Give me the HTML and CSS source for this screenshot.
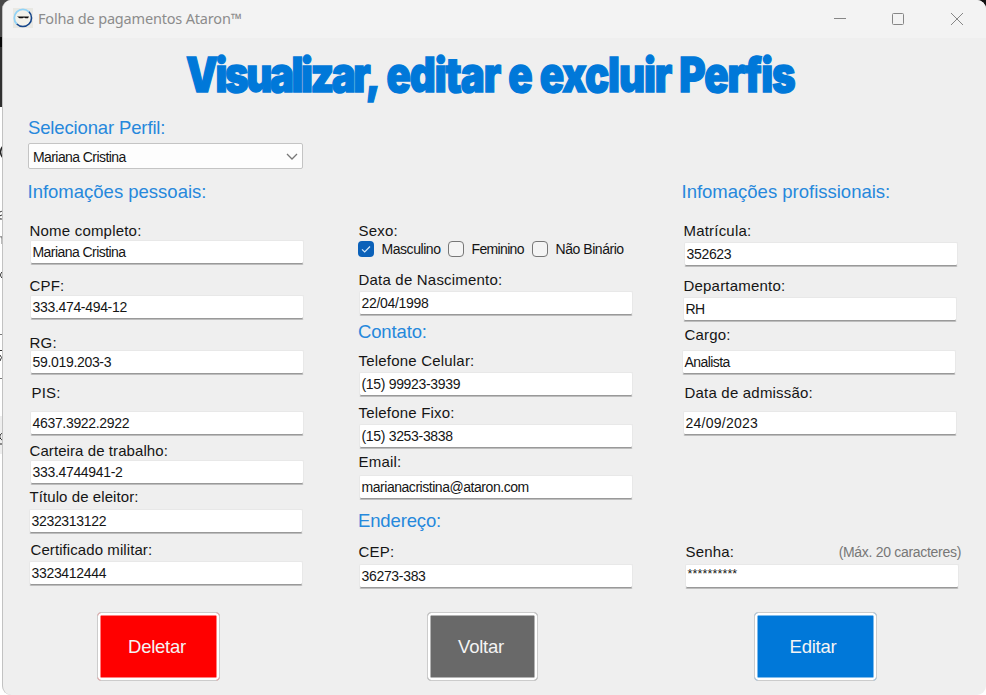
FILE: index.html
```html
<!DOCTYPE html>
<html lang="pt-BR">
<head>
<meta charset="utf-8">
<title>Folha de pagamentos Ataron™</title>
<link rel="stylesheet" href="styles.css">
</head>
<body>
<div class="desktop">
<svg class="behind" width="12" height="695" viewBox="0 0 12 695" fill="none">
  <rect width="12" height="37" fill="#484848"/><rect y="37" width="12" height="10" fill="#080808"/><rect y="47" width="12" height="60" fill="#303030"/><rect y="107" width="12" height="588" fill="#fff"/>
  <path d="M3 146Q-2 152 3 158" stroke="#222" stroke-width="1.5"/>
  <path d="M0 212Q3 210 3 214V219M3 215Q-2 215 0 219H3M3 271Q-2 275 3 279" stroke="#333"/>
  <path d="M0 237Q2 235 2 239V244" stroke="#777"/>
  <path d="M0 334.5H3M0 378.500H3" stroke="#777"/>
  <path d="M0 350.500H3M0 355Q3 357 0 361" stroke="#333"/>
  <rect y="416" width="3" height="38" fill="#eee"/><path d="M3 433Q-1 434 0 438Q2 441 3 439M0 444H3" stroke="#222"/>
</svg>
<main class="window">
  <header class="titlebar">
    <svg class="logo" width="20" height="20" viewBox="0 0 20 20" fill="none">
      <rect width="20" height="20" fill="#e8e8e3"/>
      <circle cx="10" cy="9.800" r="7.800" fill="#f3f2eb"/>
      <path d="M3.800 16A8.400 8.400 0 0 1 16 3.800" stroke="#91d3f7" stroke-width="1.800"/>
      <path d="M16 3.800A8.400 8.400 0 0 1 3.800 16" stroke="#16468b" stroke-width="1.600"/>
      <path d="M4 8.500H16L15 10.200H12.500L11 9.500L9.500 10.200H6.500Z" fill="#111"/>
    </svg>
    <span class="caption">Folha de pagamentos Ataron™</span>
    <svg class="controls" width="132" height="14" viewBox="0 0 132 14" fill="none" stroke="#868686">
      <path d="M0 6.500H12"/><rect x="58.500" y="1.500" width="11" height="11" rx="1"/><path d="M117 1L129 13M129 1L117 13"/>
    </svg>
  </header>
  <h1><span><b>Visualizar,</b> editar e excluir Perfis</span></h1>
  <div class="form">
    <section class="left">
      <h2>Selecionar Perfil:</h2>
      <div class="select g5"><span>Mariana Cristina</span><svg width="12" height="8" viewBox="0 0 12 8" fill="none" stroke="#777" stroke-width="1.300"><path d="M1 1L6 6L11 1"/></svg></div>
      <h2 class="g13 wide">Infomações pessoais:</h2>
      <label class="g22 in1">Nome completo:</label><div class="field g2 in2 words">Mariana Cristina</div>
      <label class="g14 in1">CPF:</label><div class="field g2 in2 nums">333.474-494-12</div>
      <label class="g16 in1">RG:</label><div class="field in2 nums">59.019.203-3</div>
      <label class="g11 in3">PIS:</label><div class="field g11 in2 nums">4637.3922.2922</div>
      <label class="g8 in1 tight">Carteira de trabalho:</label><div class="field g2 in2 nums">333.4744941-2</div>
      <label class="g5 in1 tight">Título de eleitor:</label><div class="field g5 in1 nums">3232313122</div>
      <label class="g9 in2 tight">Certificado militar:</label><div class="field g4 in1 nums">3323412444</div>
    </section>
    <section class="middle">
      <label>Sexo:</label>
      <div class="checks g3">
        <div class="check masc"><i class="box on"><svg width="16" height="16" viewBox="0 0 16 16" fill="none" stroke="#d5e9fb" stroke-width="1.200"><path d="M4 8.300L6.700 11L12 5.500"/></svg></i><span>Masculino</span></div>
        <div class="check fem"><i class="box"></i><span>Feminino</span></div>
        <div class="check"><i class="box"></i><span>Não Binário</span></div>
      </div>
      <label class="g16">Data de Nascimento:</label><div class="field g4 in1 nums">22/04/1998</div>
      <h2 class="g6">Contato:</h2>
      <label class="g12">Telefone Celular:</label><div class="field g4 in1 nums">(15) 99923-3939</div>
      <label class="g9">Telefone Fixo:</label><div class="field g4 in1 nums">(15) 3253-3838</div>
      <label class="g6">Email:</label><div class="field g6 in1 mail">marianacristina@ataron.com</div>
      <h2 class="g11">Endereço:</h2>
      <label class="g14">CEP:</label><div class="field g5 in1 nums">36273-383</div>
    </section>
    <section class="right">
      <h2 class="wide">Infomações profissionais:</h2>
      <label class="g22 in1">Matrícula:</label><div class="field g4 in2 nums">352623</div>
      <label class="g12 in1">Departamento:</label><div class="field g4 in1 words">RH</div>
      <label class="g6 in2">Cargo:</label><div class="field g8 words">Analista</div>
      <label class="g11 in2">Data de admissão:</label><div class="field g11 in1 date">24/09/2023</div>
      <div class="password g109"><label>Senha:</label><span>(Máx. 20 caracteres)</span></div><div class="field g5 in3 stars">**********</div>
    </section>
  </div>
  <footer><button class="delete">Deletar</button><button class="return">Voltar</button><button class="edit">Editar</button></footer>
</main>
</div>
</body>
</html>
```
FILE: styles.css
```css
* { box-sizing: border-box; }
body { margin: 0; width: 986px; height: 695px; overflow: hidden; font-family: "Liberation Sans", Arial, sans-serif; color: #151515; }
.desktop { position: relative; height: 695px; padding-left: 2px; background: linear-gradient(#111 0 50px, #fff 50px); }
.behind { position: absolute; left: 0; top: 0; }
.window { position: relative; width: 984px; height: 695px; border-left: 1px solid #c2c2c2; border-radius: 9px; background: #efefef; overflow: hidden; }
.titlebar { height: 38px; display: flex; align-items: center; padding: 0 20px 0 10px; background: #f3f3f3; }
.logo { margin-right: 5px; margin-top: -2px; }
.caption { font: 14.5px/20px "Noto Sans", sans-serif; color: #8c8c8c; flex: 1; white-space: nowrap; margin-top: -2px; letter-spacing: -.18px; }
.controls { margin-top: -1px; }
h1 { margin: 0; height: 80px; padding: 7px 0 0 183px; color: #0078d9; white-space: nowrap; font: 900 48px/60px Inter, sans-serif; }
h1 span { display: inline-block; letter-spacing: -1.3px; word-spacing: 1.5px; -webkit-text-stroke: 1.4px #0078d9; transform: scaleX(.838); transform-origin: left; }
h1 b { font-weight: 900; letter-spacing: -2.9px; }
.form { display: grid; grid-template-columns: 330px 324px 1fr; padding-left: 25px; height: 494px; align-items: start; }
.form section { display: flex; flex-direction: column; align-items: flex-start; min-width: 0; }
.middle { padding-top: 106px; }
.right { padding-top: 64px; }
h2 { margin: 0; font-size: 18.5px; line-height: 20px; height: 20px; font-weight: 400; color: #2688dc; white-space: nowrap; letter-spacing: -.14px; }
h2.wide { margin-left: -.5px; letter-spacing: 0; }
label { font-size: 15px; line-height: 14px; height: 14px; white-space: nowrap; letter-spacing: .2px; padding-left: .5px; }
label.tight { letter-spacing: .08px; }
.field { width: 274px; height: 25px; background: #fff; border: 1px solid #e8e8e8; border-bottom-color: #bdbdbd; box-shadow: inset 0 -1px #999; border-radius: 2px; padding-left: 1.5px; font-size: 14px; line-height: 23px; white-space: nowrap; }
.words { letter-spacing: -.56px; }
.nums { letter-spacing: -.32px; }
.date { letter-spacing: .25px; }
.mail { letter-spacing: -.46px; }
.stars { font-size: 12.5px; line-height: 19px; letter-spacing: .12px; }
.select { width: 275px; height: 26px; border: 1px solid #c4c4c4; border-radius: 2px; background: #fdfdfd; display: flex; align-items: center; justify-content: space-between; padding: 1px 4px 0; font-size: 14px; letter-spacing: -.58px; }
.checks { display: flex; height: 16px; }
.check { display: flex; gap: 7.500px; font-size: 14px; line-height: 17px; letter-spacing: -.45px; white-space: nowrap; }
.masc { width: 90px; }
.fem { width: 84px; letter-spacing: -.65px; }
.fem + .check { letter-spacing: -.45px; }
.box { width: 16px; height: 16px; flex: none; border: 1px solid #777; border-radius: 4px; background: #f4f4f4; }
.box.on { border: 0; background: #0b61b9; }
.box svg { display: block; }
.password { width: 279px; display: flex; justify-content: space-between; padding-left: 3px; height: 14px; }
.password span { font-size: 14px; line-height: 14px; color: #777; white-space: nowrap; letter-spacing: -.3px; }
footer { display: flex; padding-left: 94px; }
button { height: 69px; border: 1px solid #ccc; border-radius: 4px; outline: 0; padding: 0 3px 0 0; box-shadow: inset 0 0 0 2.500px #fff; color: #f4f4f4; font: 18.5px "Liberation Sans", sans-serif; letter-spacing: -.25px; }
.delete { width: 123px; background: #f00; }
.return { width: 111px; background: #696969; margin: 0 216px 0 207px; }
.edit { width: 123px; background: #0078d9; padding-right: 5px; }
.in1 { margin-left: 1px; }
.in2 { margin-left: 2px; }
.in3 { margin-left: 3px; }
.g2 { margin-top: 2px; }
.g3 { margin-top: 3px; }
.g4 { margin-top: 4px; }
.g5 { margin-top: 5px; }
.g6 { margin-top: 6px; }
.g8 { margin-top: 8px; }
.g9 { margin-top: 9px; }
.g11 { margin-top: 11px; }
.g12 { margin-top: 12px; }
.g13 { margin-top: 13px; }
.g14 { margin-top: 14px; }
.g16 { margin-top: 16px; }
.g22 { margin-top: 22px; }
.g109 { margin-top: 109px; }
```
